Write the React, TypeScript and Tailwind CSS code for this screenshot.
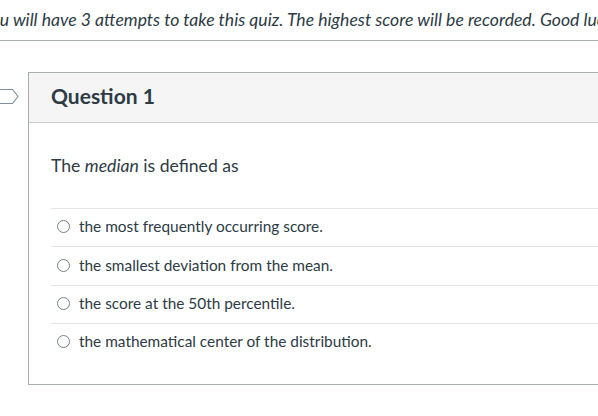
import React from 'react';

const answers = [
  'the most frequently occurring score.',
  'the smallest deviation from the mean.',
  'the score at the 50th percentile.',
  'the mathematical center of the distribution.',
];

const FlagIcon = () => (
  <svg className="absolute left-0 top-[88px]" width="20" height="17" viewBox="0 0 20 17" fill="none">
    <path d="M-3 1.5 H12.5 L18 8.5 L12.5 15.5 H-3" stroke="#7d8f9e" strokeWidth="1.2" strokeLinejoin="round" />
  </svg>
);

const AnswerRow: React.FC<{ label: string }> = ({ label }) => (
  <div className="h-[38.4px] border-t border-[#e3e6e8] flex items-center pl-[6px] pb-[2px]">
    <span className="w-[13px] h-[13px] rounded-full border border-[#7b8389] bg-white" />
    <span className="ml-[9px] text-[15.4px] text-[#2d3b45]">{label}</span>
  </div>
);

export default function App() {
  return (
    <div className="relative w-[598px] h-[416px] overflow-hidden bg-white" style={{ fontFamily: 'Lato, "Noto Sans", sans-serif' }}>
      <div className="h-[41px] flex items-center border-b border-[#a8adb0] whitespace-nowrap">
        <p className="-ml-[18px] italic text-[17.6px] text-[#2d3b45]">
          You will have 3 attempts to take this quiz. The highest score will be recorded. Good luck!
        </p>
      </div>
      <FlagIcon />
      <div className="mt-[31px] ml-[28px] w-[640px] border border-[#a8adb0]">
        <div className="h-[50px] bg-[#f5f5f5] border-b border-[#c7cdd1] flex items-center pl-[22px] pb-[4px]">
          <h2 className="text-[21px] font-bold text-[#2d3b45]">Question 1</h2>
        </div>
        <div className="pl-[22px] pt-[30px] pb-[22px]">
          <p className="text-[17.6px] leading-[26px] text-[#2d3b45]">
            The <em>median</em> is defined as
          </p>
          <div className="mt-[29px]">
            {answers.map((a) => (
              <AnswerRow key={a} label={a} />
            ))}
          </div>
        </div>
      </div>
    </div>
  );
}
